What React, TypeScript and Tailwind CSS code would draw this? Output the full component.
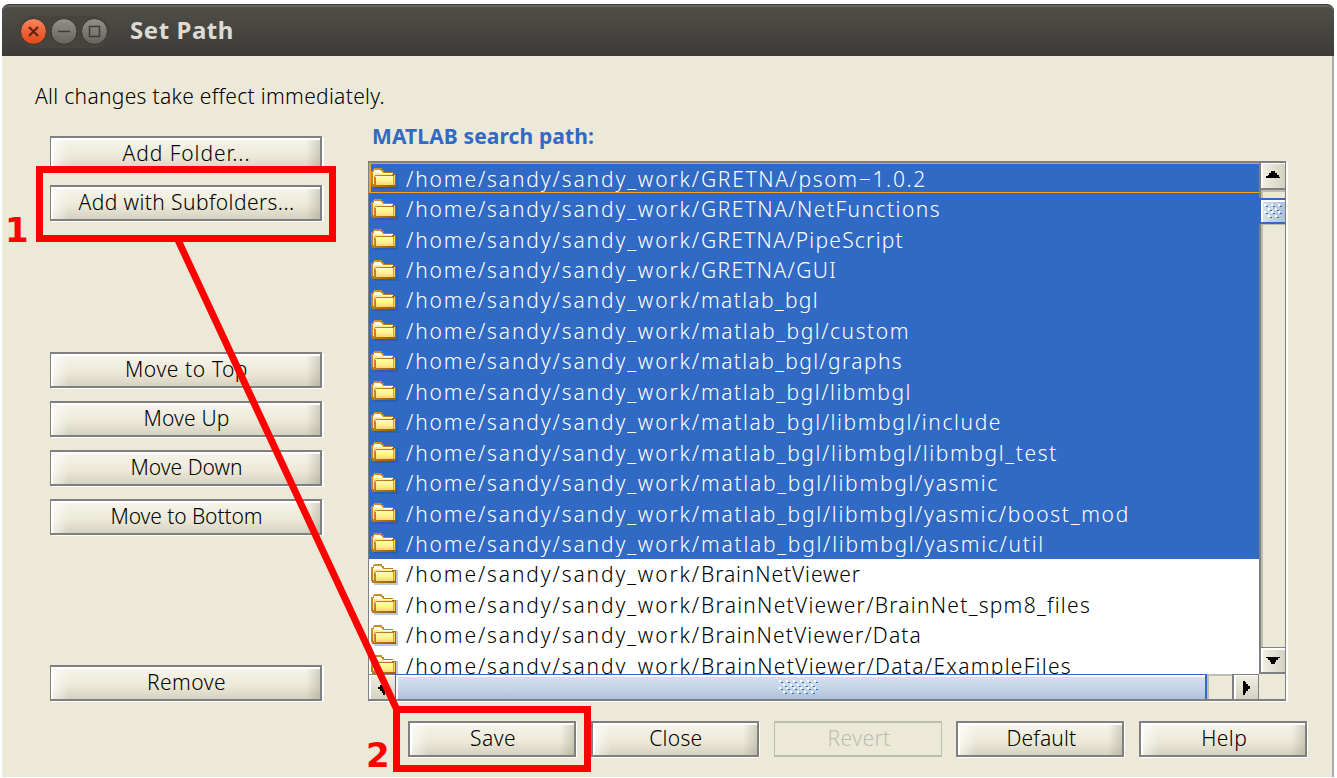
import { useLayoutEffect, useRef, useState } from "react";
import clsx from "clsx";

/** Text whose tracking is adjusted so that it spans the given width. */
function Tracked({ text, width, className }: { text: string; width: number; className?: string }) {
  const ref = useRef<HTMLSpanElement>(null);
  const [spacing, setSpacing] = useState(0);
  useLayoutEffect(() => {
    const el = ref.current;
    if (!el) return;
    el.style.letterSpacing = "0px";
    const natural = el.getBoundingClientRect().width;
    const next = (width - natural) / text.length;
    el.style.letterSpacing = `${next}px`;
    setSpacing(next);
  }, [text, width]);
  return (
    <span ref={ref} className={clsx("inline-block whitespace-pre", className)} style={{ letterSpacing: spacing }}>
      {text}
    </span>
  );
}

function PushButton({ label, textWidth, wide, disabled }: { label: string; textWidth: number; wide?: boolean; disabled?: boolean }) {
  const size = wide ? "w-[272px]" : "w-[168px]";
  if (disabled) {
    return (
      <button className={clsx(size, "flex h-9 shrink-0 items-center justify-center border border-t-2 border-b-2 border-[#bdbdb0] pb-px pl-[3px] text-[#bdbdb0]")}>
        <Tracked text={label} width={textWidth} />
      </button>
    );
  }
  return (
    <button
      className={clsx(
        size,
        "h-9 shrink-0 border-2 border-[#808080]",
        wide ? "border-l shadow-[2px_1px_0_#fff]" : "shadow-[1px_1px_0_#fff]"
      )}
    >
      <span className="flex h-8 items-center justify-center border-t-2 border-l-2 border-white bg-[linear-gradient(90deg,rgba(255,255,255,.6)_0,rgba(255,255,255,0)_16px,rgba(0,0,0,0)_calc(100%_-_14px),rgba(110,105,80,.25)_100%),linear-gradient(180deg,#f6f4ea_0%,#ece9d8_55%,#d5d2c1_100%)] pb-[3px]">
        <Tracked text={label} width={textWidth} />
      </span>
    </button>
  );
}

function FolderIcon() {
  return (
    <svg width="27" height="23" viewBox="0 0 27 23" shapeRendering="crispEdges" className="mt-px shrink-0">
      <defs>
        <linearGradient id="front" x1="0" y1="0" x2="0" y2="1">
          <stop offset="0" stopColor="#ffff99" />
          <stop offset="0.55" stopColor="#ffef90" />
          <stop offset="1" stopColor="#ffd070" />
        </linearGradient>
        <linearGradient id="edge" x1="0" y1="0" x2="1" y2="1">
          <stop offset="0" stopColor="#d2963a" />
          <stop offset="1" stopColor="#985f00" />
        </linearGradient>
      </defs>
      <path d="M3 20h22V7h2v15H3z" fill="#1d4584" opacity=".3" />
      <path d="M0 4h2V2h1V1h8v2h2v2h9v2h3v13H1v-2H0z" fill="url(#edge)" />
      <path d="M2 5h1V3h7v2h2v2h9v1H4v9H2z" fill="#ffef8c" />
      <path d="M3 3h6v1h2v2H3zM12 6h10v1H12z" fill="#fffff5" />
      <path d="M5 10h17v8H5z" fill="url(#front)" />
      <path d="M4 9h18v1H4z" fill="#fff5cc" />
      <path d="M3 9h1v10H3z" fill="#c98a28" />
      <path d="M22 9h1v9h-1z" fill="#d9a43c" />
      <path d="M23 8h1v10h-1z" fill="#ffd25c" />
    </svg>
  );
}

const base = "/home/sandy/sandy_work/";
const rows: { path: string; end: number; selected: boolean }[] = [
  { path: "GRETNA/psom−1.0.2", end: 925, selected: true },
  { path: "GRETNA/NetFunctions", end: 939, selected: true },
  { path: "GRETNA/PipeScript", end: 902, selected: true },
  { path: "GRETNA/GUI", end: 835, selected: true },
  { path: "matlab_bgl", end: 817, selected: true },
  { path: "matlab_bgl/custom", end: 908, selected: true },
  { path: "matlab_bgl/graphs", end: 901, selected: true },
  { path: "matlab_bgl/libmbgl", end: 910, selected: true },
  { path: "matlab_bgl/libmbgl/include", end: 1000, selected: true },
  { path: "matlab_bgl/libmbgl/libmbgl_test", end: 1056, selected: true },
  { path: "matlab_bgl/libmbgl/yasmic", end: 997, selected: true },
  { path: "matlab_bgl/libmbgl/yasmic/boost_mod", end: 1128, selected: true },
  { path: "matlab_bgl/libmbgl/yasmic/util", end: 1043, selected: true },
  { path: "BrainNetViewer", end: 859, selected: false },
  { path: "BrainNetViewer/BrainNet_spm8_files", end: 1089, selected: false },
  { path: "BrainNetViewer/Data", end: 920, selected: false },
  { path: "BrainNetViewer/Data/ExampleFiles", end: 1070, selected: false },
];
const textStart = 406;
const prefixEnd = 701;

function PathRow({ path, end, selected, first }: { path: string; end: number; selected: boolean; first: boolean }) {
  return (
    <div className={clsx("relative flex h-[30.45px] shrink-0 items-center pl-[2px] leading-[30px]", selected ? "bg-[#316ac5] text-white" : "bg-white text-black")}>
      {first && <div className="absolute inset-x-0 top-0 h-[30px] border border-r-0 border-l-2 border-[#f2a31b]" />}
      <FolderIcon />
      <span className="ml-2 flex pt-px">
        <Tracked text={base} width={prefixEnd - textStart} />
        <Tracked text={path} width={end - prefixEnd + 2} />
      </span>
    </div>
  );
}

function Grip({ cols, rows: count }: { cols: number; rows: number }) {
  const cells = Array.from({ length: cols * count }, (_, i) => ({ c: i % cols, r: Math.floor(i / cols) }))
    .filter(({ c, r }) => (c + r) % 2 === 0)
    .map(({ c, r }) => ({ x: Math.round(c * 3.5), y: Math.round(r * 3.7) }));
  return (
    <svg width={cols * 3.5 + 2} height={count * 3.7 + 2} shapeRendering="crispEdges">
      {cells.map((p, i) => (
        <g key={i}>
          <rect x={p.x} y={p.y} width="2" height="2" fill="#fff" />
          <rect x={p.x + 2} y={p.y + 2} width="2" height="1" fill="#316ac5" />
        </g>
      ))}
    </svg>
  );
}

function VerticalBar() {
  return (
    <div className="flex w-[26px] shrink-0 flex-col border-l-2 border-[#808080] bg-[#ece9d8]">
      <div className="flex h-[25px] items-center justify-center border-t border-l-2 border-white bg-gradient-to-r from-[#f1efe3] to-[#d4d1c0]">
        <svg width="15" height="8" shapeRendering="crispEdges" className="-mt-[2px] -ml-[3px]"><path d="M6 0h4v2h2v2h2v2h1v1H1V5h2V4h1V2h2z" /></svg>
      </div>
      <div className="h-[2px] bg-[#808080]" />
      <div className="h-2 border-t-2 border-l-2 border-[#bdbdb0]" />
      <div className="-ml-[2px] h-[26px] border-y-2 border-l-2 border-[#316ac5]">
        <div className="flex h-[22px] items-center justify-center border-t-2 border-l-2 border-white bg-gradient-to-r from-[#d3e0ee] to-[#adc0d8]">
          <Grip cols={5} rows={4} />
        </div>
      </div>
      <div className="flex-1 border-t border-l-2 border-[#bdbdb0]" />
      <div className="h-px bg-[#808080]" />
      <div className="flex h-6 items-center justify-center border-t-2 border-l-2 border-white bg-gradient-to-r from-[#f1efe3] to-[#d4d1c0]">
        <svg width="15" height="8" shapeRendering="crispEdges" className="-ml-[3px]"><path d="M1 0h14v1h-2v2h-2v2h-1v2H6V5H5V3H3V1H1z" /></svg>
      </div>
      <div className="h-[2px] bg-[#808080]" />
    </div>
  );
}

function HorizontalBar() {
  return (
    <div className="flex h-[25px] bg-[#ece9d8]">
      <div className="flex w-[26px] items-center justify-center border-t border-[#808080] bg-gradient-to-b from-[#f1efe3] to-[#d4d1c0] shadow-[inset_2px_1px_0_#fff]">
        <svg width="8" height="15" shapeRendering="crispEdges"><path d="M7 1v14H5v-2H4v-2H2V9H0V7h2V5h2V3h1V1z" /></svg>
      </div>
      <div className="flex w-[812px] border-t border-r-2 border-l border-[#316ac5]">
        <div className="flex flex-1 items-center justify-center border-t-2 border-l-2 border-white bg-gradient-to-b from-[#d3e0ee] via-[#c5d5e7] to-[#adc0d8] pr-1">
          <Grip cols={11} rows={4} />
        </div>
      </div>
      <div className="w-[25px] border-t-2 border-l-2 border-[#bdbdb0]" />
      <div className="flex w-[27px] items-center justify-center border-t border-r border-l-2 border-[#808080] bg-gradient-to-b from-[#f1efe3] to-[#d4d1c0] pl-[2px] shadow-[inset_2px_1px_0_#fff]">
        <svg width="8" height="15" shapeRendering="crispEdges"><path d="M0 1h2v1h1v2h2v2h2v3H5v2H3v2H2v2H0z" /></svg>
      </div>
      <div className="flex-1" />
    </div>
  );
}

function WindowControls() {
  return (
    <svg width="92" height="32" viewBox="0 0 92 32">
      <defs>
        <linearGradient id="close" x1="0" y1="0" x2="0" y2="1">
          <stop offset="0" stopColor="#f58860" />
          <stop offset="0.5" stopColor="#ee6237" />
          <stop offset="1" stopColor="#df4816" />
        </linearGradient>
        <linearGradient id="grey" x1="0" y1="0" x2="0" y2="1">
          <stop offset="0" stopColor="#92918a" />
          <stop offset="1" stopColor="#63625b" />
        </linearGradient>
      </defs>
      <rect width="92" height="32" rx="16" fill="#45443f" />
      <g stroke="#34332f" strokeWidth="1">
        <circle cx="15.5" cy="15.5" r="13" fill="url(#close)" />
        <circle cx="46" cy="15.5" r="13" fill="url(#grey)" />
        <circle cx="76.500" cy="15.5" r="13" fill="url(#grey)" />
      </g>
      <path d="M11 11l9 9M20 11l-9 9" stroke="#5d2612" strokeWidth="2.2" />
      <path d="M40 15.500h12" stroke="#3c3b37" strokeWidth="1.4" />
      <rect x="71.500" y="10.500" width="10" height="10" fill="none" stroke="#3c3b37" strokeWidth="1.4" />
    </svg>
  );
}

export default function App() {
  return (
    <div className="relative h-[778px] w-[1337px] overflow-hidden bg-white pt-1 pl-[2px] font-['Noto_Sans','Open_Sans',sans-serif] text-[21px] leading-none font-[350] text-black">
      <div className="flex w-[1332px] flex-col">
        <header className="flex h-[52px] items-center rounded-t-[7px] border-t border-[#3c3b37] bg-gradient-to-b from-[#504f49] to-[#3c3b37] pl-4 shadow-[inset_0_2px_0_#65645e]">
          <div className="mt-[3px]"><WindowControls /></div>
          <h1 className="-mt-px ml-5 font-['Noto_Sans','Open_Sans',sans-serif] text-[24px] font-bold text-[#dfdbd2]">
            <Tracked text="Set Path" width={104} />
          </h1>
        </header>

        <main className="flex h-[721px] w-[1332px] flex-col border-r-2 border-[#aaa] bg-[#ece9d8]">
          <p className="flex h-[65px] shrink-0 items-center pt-[15px] pl-[33px]">
            <Tracked text="All changes take effect immediately." width={350} />
          </p>

          <div className="flex h-[581px] shrink-0">
            <div className="flex w-[366px] shrink-0 flex-col gap-[13px] pt-[15px] pl-12">
              <PushButton wide label="Add Folder..." textWidth={128} />
              <PushButton wide label="Add with Subfolders..." textWidth={216} />
              <div className="mt-[118px] flex flex-col gap-[13px]">
                <PushButton wide label="Move to Top" textWidth={123} />
                <PushButton wide label="Move Up" textWidth={86} />
                <PushButton wide label="Move Down" textWidth={112} />
                <PushButton wide label="Move to Bottom" textWidth={152} />
              </div>
              <div className="mt-[117px]">
                <PushButton wide label="Remove" textWidth={79} />
              </div>
            </div>

            <section className="flex w-[918px] shrink-0 flex-col">
              <h2 className="flex h-10 items-center pb-[10px] pl-1 font-bold text-[#316ac5]">
                <Tracked text="MATLAB search path:" width={222} />
              </h2>
              <div className="flex h-[540px] flex-col border border-t-2 border-b-2 border-[#808080] shadow-[2px_1px_0_#fff]">
                <div className="flex h-[511px]">
                  <div className="flex flex-1 flex-col overflow-hidden bg-white">
                    {rows.map((row, i) => (
                      <PathRow key={row.path} {...row} first={i === 0} />
                    ))}
                  </div>
                  <VerticalBar />
                </div>
                <HorizontalBar />
              </div>
            </section>
          </div>

          <footer className="mt-[19px] ml-[406px] flex gap-[14.800px]">
            <PushButton label="Save" textWidth={46} />
            <PushButton label="Close" textWidth={53} />
            <PushButton label="Revert" textWidth={63} disabled />
            <PushButton label="Default" textWidth={70} />
            <PushButton label="Help" textWidth={46} />
          </footer>
        </main>
      </div>

      <div className="pointer-events-none absolute inset-0 font-['DejaVu_Sans',sans-serif] text-[34px] font-bold text-[#f00]">
        <svg width="1337" height="778" className="absolute inset-0" fill="none" stroke="#f00">
          <rect x="39.500" y="169.500" width="293" height="69" strokeWidth="7" />
          <rect x="396.500" y="709.500" width="191" height="59" strokeWidth="7" />
          <path d="M178 240L397 710" strokeWidth="7" />
        </svg>
        <span className="absolute top-[213px] left-[5px]">1</span>
        <span className="absolute top-[738px] left-[366px]">2</span>
      </div>
    </div>
  );
}
